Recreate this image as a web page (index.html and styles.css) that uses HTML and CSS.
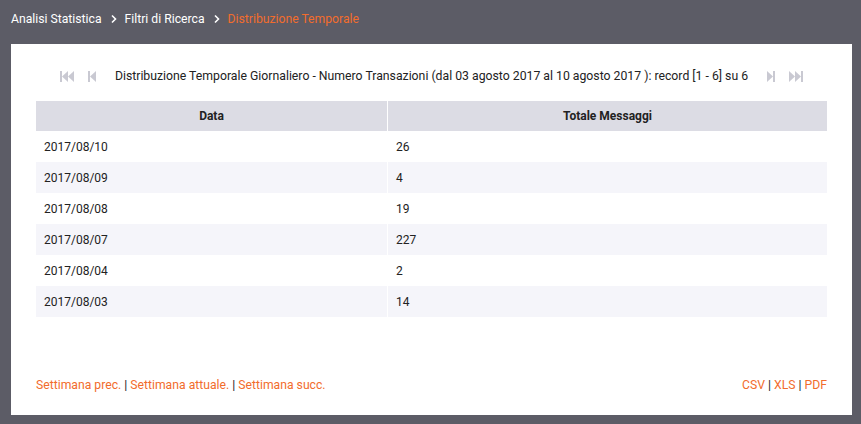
FILE: index.html
```html
<!DOCTYPE html>
<html lang="it">
<head>
<meta charset="utf-8">
<link rel="stylesheet" href="styles.css">
</head>
<body>
<nav class="crumbs">
  <span class="crumb">Analisi Statistica</span>
  <svg class="chev" width="8" height="10" viewBox="0 0 8 10"><path d="M2 1.5 L5.5 5 L2 8.5" fill="none" stroke="#fff" stroke-width="1.6"/></svg>
  <span class="crumb">Filtri di Ricerca</span>
  <svg class="chev" width="8" height="10" viewBox="0 0 8 10"><path d="M2 1.5 L5.5 5 L2 8.5" fill="none" stroke="#fff" stroke-width="1.6"/></svg>
  <span class="crumb current">Distribuzione Temporale</span>
</nav>
<main class="panel">
  <div class="pager">
    <svg class="pi first" width="14" height="11" viewBox="0 0 14 11"><rect x="0" y="0" width="2" height="11"/><path d="M2 5.5 L8 0 L8 11 Z"/><path d="M8 5.5 L14 0 L14 11 Z"/></svg>
    <svg class="pi prev" width="8" height="11" viewBox="0 0 8 11"><rect x="0" y="0" width="2" height="11"/><path d="M2 5.5 L8 0 L8 11 Z"/></svg>
    <span class="ptext">Distribuzione Temporale Giornaliero - Numero Transazioni (dal 03 agosto 2017 al 10 agosto 2017 ): record [1 - 6] su 6</span>
    <svg class="pi next" width="8" height="11" viewBox="0 0 8 11"><path d="M0 0 L6 5.5 L0 11 Z"/><rect x="6" y="0" width="2" height="11"/></svg>
    <svg class="pi last" width="14" height="11" viewBox="0 0 14 11"><path d="M0 0 L6 5.5 L0 11 Z"/><path d="M6 0 L12 5.5 L6 11 Z"/><rect x="12" y="0" width="2" height="11"/></svg>
  </div>
  <table class="grid">
    <thead>
      <tr><th class="c1">Data</th><th>Totale Messaggi</th></tr>
    </thead>
    <tbody>
      <tr><td class="c1">2017/08/10</td><td>26</td></tr>
      <tr><td class="c1">2017/08/09</td><td>4</td></tr>
      <tr><td class="c1">2017/08/08</td><td>19</td></tr>
      <tr><td class="c1">2017/08/07</td><td>227</td></tr>
      <tr><td class="c1">2017/08/04</td><td>2</td></tr>
      <tr><td class="c1">2017/08/03</td><td>14</td></tr>
    </tbody>
  </table>
  <div class="foot">
    <div class="links"><a>Settimana prec.</a> | <a>Settimana attuale.</a> | <a>Settimana succ.</a></div>
    <div class="links"><a>CSV</a> | <a>XLS</a> | <a>PDF</a></div>
  </div>
</main>
</body>
</html>
```
FILE: styles.css
```css
html, body {
  margin: 0;
  padding: 0;
}
body {
  background: #5c5c66;
  font-family: Roboto, "Liberation Sans", sans-serif;
  font-size: 12px;
  color: #222;
  width: 861px;
  height: 424px;
  overflow: hidden;
}
.crumbs {
  height: 44px;
  box-sizing: border-box;
  padding: 0 0 6px 11px;
  display: flex;
  align-items: center;
  color: #fff;
  font-size: 12.2px;
}
.chev {
  margin: 0 7px 0 8px;
}
.crumb.current {
  color: #f26c2c;
}
.panel {
  background: #fff;
  margin-left: 11px;
  width: 841px;
  height: 371px;
  box-sizing: border-box;
  padding: 0 25px;
  display: flex;
  flex-direction: column;
}
.pager {
  height: 57px;
  display: flex;
  align-items: center;
  justify-content: center;
  padding-top: 7px;
  box-sizing: border-box;
}
.pi {
  fill: #c9c9d2;
}
.first { margin-right: 14px; }
.prev { margin-right: 19px; }
.next { margin-left: 19px; margin-right: 14px; }
.ptext {
  color: #222;
  font-size: 12.25px;
}
.grid {
  width: 100%;
  border-collapse: collapse;
  table-layout: fixed;
}
.grid th {
  background: #dcdce4;
  height: 30px;
  font-weight: 700;
  font-size: 12px;
  text-align: center;
  padding: 0;
}
.grid th.c1 {
  border-right: 1px solid #fff;
  width: 351px;
}
.grid td {
  height: 31px;
  padding: 0 8px;
  font-size: 12px;
}
.grid td.c1 {
  border-right: 1px solid #fff;
}
.grid tbody tr:nth-child(even) td {
  background: #f5f5fa;
}
.foot {
  margin-top: auto;
  height: 37px;
  display: flex;
  justify-content: space-between;
  align-items: flex-start;
  font-size: 12.2px;
}
.links {
  color: #222;
}
.links a {
  color: #f26c2c;
}
```
